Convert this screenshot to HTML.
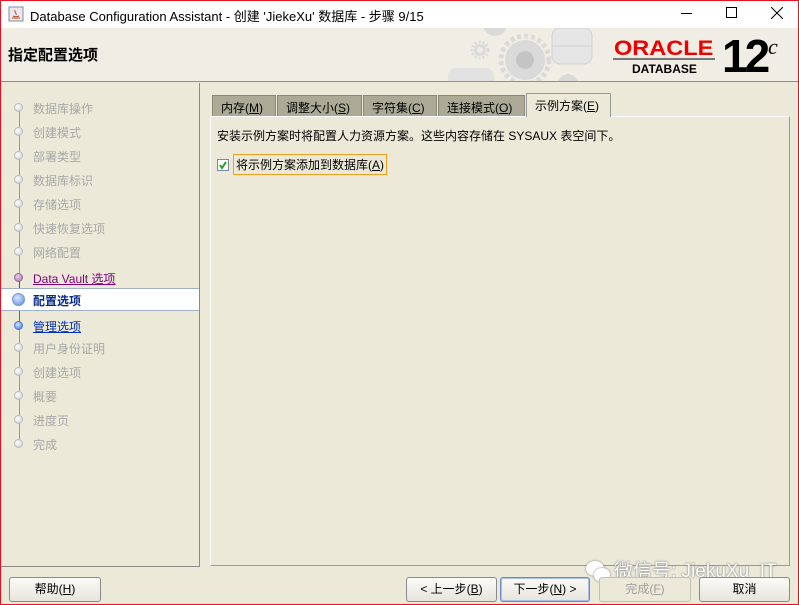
<!DOCTYPE html>
<html><head><meta charset="utf-8"><style>
*{margin:0;padding:0;box-sizing:border-box}
body{width:799px;height:605px;overflow:hidden;background:#ece9d8;font-family:"Liberation Sans","Noto Sans CJK SC",sans-serif;font-size:12px;color:#000;position:relative}
.frame{position:absolute;left:0;top:0;width:799px;height:605px;border:1px solid #e81123;pointer-events:none;z-index:9}
.title{position:absolute;left:0;top:0;width:799px;height:28px;background:#fff;font-size:13px}
.title span{position:absolute;left:30px;top:6px}
.hdr{position:absolute;left:0;top:28px;width:799px;height:54px;background:#f0eee4;border-bottom:1px solid #8e8e8e;overflow:hidden}
.hdr h1{position:absolute;left:8px;top:16px;font-size:15px;font-weight:bold}
.left{position:absolute;left:1px;top:83px;width:199px;height:484px;border-right:1px solid #8a8a8a;border-bottom:1px solid #8a8a8a;background:#ece9d8}
.step{position:absolute;left:33px;font-size:12px;color:#a8a8a8;white-space:nowrap}
.dot{position:absolute;left:14px;width:9px;height:9px;border-radius:50%;background:radial-gradient(circle at 40% 35%,#fff,#ccc);border:1px solid #bbb}
.vline{position:absolute;left:18px;width:1px;background:#999}
.panel{position:absolute;left:210px;top:116px;width:580px;height:450px;border:1px solid #9a9a9a;border-top-color:#fff;border-left-color:#fff;background:#ece9d8}
.tab{position:absolute;top:95px;height:22px;background:#acaa96;border:1px solid #8a8a7a;border-bottom:none;font-size:12px;padding:3px 0 0 8px;white-space:nowrap}
.tab.sel{background:#ece9d8;top:93px;height:24px;border-color:#999;z-index:2}
.btn{position:absolute;top:577px;height:25px;border:1px solid #8a8a8a;border-radius:3px;background:linear-gradient(#fbfbf8,#e6e4da);font-size:12px;text-align:center;line-height:22px}
u{text-decoration:underline}
</style></head><body>
<div class="title">
<svg style="position:absolute;left:8px;top:6px" width="16" height="16"><rect x="1" y="1" width="14" height="14" fill="#e8e8f0" stroke="#8a8aa0"/><path d="M4 12h8M5 10c2 1 4 1 6 0M7 4c-1 2 2 3 1 5" stroke="#c05020" fill="none"/></svg>
<span>Database Configuration Assistant - 创建 'JiekeXu' 数据库 - 步骤 9/15</span>
<div style="position:absolute;left:681px;top:13px;width:11px;height:1px;background:#000"></div>
<div style="position:absolute;left:726px;top:7px;width:11px;height:11px;border:1px solid #000"></div>
<svg style="position:absolute;left:771px;top:7px" width="12" height="12"><path d="M0 0L12 12M12 0L0 12" stroke="#000"/></svg>
</div>
<div class="hdr"><h1>指定配置选项</h1>
<svg style="position:absolute;left:440px;top:0" width="160" height="54">
<g fill="#dadada">
<circle cx="85" cy="32" r="20"/><circle cx="85" cy="32" r="24" fill="none" stroke="#dadada" stroke-width="5" stroke-dasharray="4 3"/>
<circle cx="40" cy="22" r="6"/><circle cx="40" cy="22" r="8" fill="none" stroke="#dadada" stroke-width="3" stroke-dasharray="2 2"/>
<circle cx="55" cy="-4" r="12"/><circle cx="128" cy="56" r="10"/>
</g>
<circle cx="85" cy="32" r="9" fill="#c4c4c4"/><circle cx="40" cy="22" r="3" fill="#f0eee4"/>
<rect x="112" y="0" width="40" height="36" rx="8" fill="#e6e6e6" stroke="#d0d0d0"/><path d="M112 18h40" stroke="#cfcfcf"/>
<rect x="8" y="40" width="46" height="20" rx="8" fill="#e2e2e2"/>
</svg>
<div style="position:absolute;left:614px;top:9px;color:#e00;font-weight:bold;font-size:21px;transform:scaleX(1.12);transform-origin:left">ORACLE</div>
<div style="position:absolute;left:613px;top:30px;width:102px;height:2px;background:#777"></div>
<div style="position:absolute;left:632px;top:34px;font-weight:bold;font-size:12px">DATABASE</div>
<div style="position:absolute;left:722px;top:4px;font-weight:bold;font-size:46px;letter-spacing:-3px;line-height:48px">12</div>
<div style="position:absolute;left:768px;top:6px;font-style:italic;font-size:22px;font-family:'Liberation Serif',serif">c</div>
</div>
<div class="left">
<div class="vline" style="top:24px;height:168px"></div>
<div class="vline" style="top:192px;height:24px;background:#8a2a8a"></div>
<div class="vline" style="top:216px;height:28px;background:#3a6ad0"></div>
<div class="vline" style="top:244px;height:116px"></div>
<div style="position:absolute;left:0;top:205px;width:198px;height:23px;background:#fff;border-top:1px solid #a0b0c8;border-bottom:1px solid #a0b0c8"></div>
</div>
<div style="position:absolute;left:0;top:0">
<div class="dot" style="top:103px"></div><div class="step" style="top:100px">数据库操作</div>
<div class="dot" style="top:127px"></div><div class="step" style="top:124px">创建模式</div>
<div class="dot" style="top:151px"></div><div class="step" style="top:148px">部署类型</div>
<div class="dot" style="top:175px"></div><div class="step" style="top:172px">数据库标识</div>
<div class="dot" style="top:199px"></div><div class="step" style="top:196px">存储选项</div>
<div class="dot" style="top:223px"></div><div class="step" style="top:220px">快速恢复选项</div>
<div class="dot" style="top:247px"></div><div class="step" style="top:244px">网络配置</div>
<div class="dot" style="top:273px;background:radial-gradient(circle at 40% 35%,#e8d0e8,#a070a8);border-color:#9a6aa0"></div><div class="step" style="top:270px;color:#800080"><u>Data Vault 选项</u></div>
<div class="dot" style="top:293px;left:12px;width:13px;height:13px;background:radial-gradient(circle at 40% 35%,#dbe8ff,#5a8ae0);border-color:#6a9ad0"></div><div class="step" style="top:292px;color:#0a2a8a;font-weight:bold">配置选项</div>
<div class="dot" style="top:321px;background:radial-gradient(circle at 40% 35%,#dbe8ff,#3a70e0);border-color:#4a7ad0"></div><div class="step" style="top:318px;color:#0030b0"><u>管理选项</u></div>
<div class="dot" style="top:343px"></div><div class="step" style="top:340px">用户身份证明</div>
<div class="dot" style="top:367px"></div><div class="step" style="top:364px">创建选项</div>
<div class="dot" style="top:391px"></div><div class="step" style="top:388px">概要</div>
<div class="dot" style="top:415px"></div><div class="step" style="top:412px">进度页</div>
<div class="dot" style="top:439px"></div><div class="step" style="top:436px">完成</div>
</div>
<div class="tab" style="left:212px;width:64px">内存(<u>M</u>)</div>
<div class="tab" style="left:277px;width:85px">调整大小(<u>S</u>)</div>
<div class="tab" style="left:363px;width:74px">字符集(<u>C</u>)</div>
<div class="tab" style="left:438px;width:87px">连接模式(<u>O</u>)</div>
<div class="tab sel" style="left:526px;width:85px">示例方案(<u>E</u>)</div>
<div class="panel">
<div style="position:absolute;left:6px;top:10px;font-size:12px">安装示例方案时将配置人力资源方案。这些内容存储在 SYSAUX 表空间下。</div>
<div style="position:absolute;left:6px;top:42px;width:12px;height:12px;border:1px solid #7a8a99;background:#fff"><svg width="10" height="10" style="position:absolute;left:0;top:0"><path d="M2 5l2 3 4-6" stroke="#21a121" stroke-width="2" fill="none"/></svg></div>
<div style="position:absolute;left:22px;top:37px;border:1px solid #f0a020;padding:1px 2px;font-size:12px">将示例方案添加到数据库(<u>A</u>)</div>
</div>
<div style="position:absolute;left:586px;top:556px;color:#fff;font-size:19px;text-shadow:0 0 2px #888,0 0 1px #666;white-space:nowrap">
<span style="display:inline-block;width:28px;height:22px;vertical-align:middle;position:relative"><span style="position:absolute;left:0;top:0;width:18px;height:15px;border-radius:50%;background:#fff;box-shadow:0 0 2px #777"></span><span style="position:absolute;left:8px;top:7px;width:16px;height:14px;border-radius:50%;background:#fff;box-shadow:0 0 2px #777"></span></span>微信号: JiekuXu_IT</div>
<div class="btn" style="left:9px;width:92px">帮助(<u>H</u>)</div>
<div class="btn" style="left:406px;width:91px">&lt; 上一步(<u>B</u>)</div>
<div class="btn" style="left:500px;width:90px;border-color:#6a8ac8;box-shadow:inset 0 0 0 1px #a8c0e8">下一步(<u>N</u>) &gt;</div>
<div class="btn" style="left:599px;width:92px;color:#a0a0a0;border-color:#c0c0b8;background:#ece9d8">完成(<u>F</u>)</div>
<div class="btn" style="left:699px;width:91px">取消</div>
<div class="frame"></div>
</body></html>
